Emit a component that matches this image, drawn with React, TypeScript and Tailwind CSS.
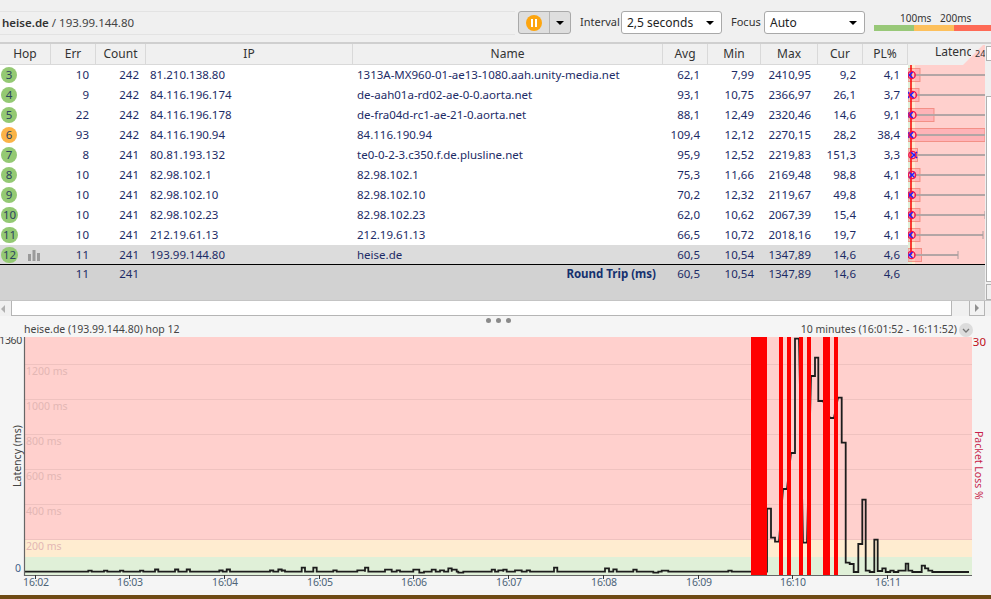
const hops = [
  { hop: 3, err: 10, count: 242, ip: "81.210.138.80", name: "1313A-MX960-01-ae13-1080.aah.unity-media.net", avg: "62,1", min: "7,99", max: "2410,95", cur: "9,2", pl: "4,1", box: 12, red: 911.2, blue: 909.6, end: 0 },
  { hop: 4, err: 9, count: 242, ip: "84.116.196.174", name: "de-aah01a-rd02-ae-0-0.aorta.net", avg: "93,1", min: "10,75", max: "2366,97", cur: "26,1", pl: "3,7", box: 11, red: 912.4, blue: 910.6, end: 0 },
  { hop: 5, err: 22, count: 242, ip: "84.116.196.178", name: "de-fra04d-rc1-ae-21-0.aorta.net", avg: "88,1", min: "12,49", max: "2320,46", cur: "14,6", pl: "9,1", box: 26, red: 912, blue: 909.8, end: 0 },
  { hop: 6, err: 93, count: 242, ip: "84.116.190.94", name: "84.116.190.94", avg: "109,4", min: "12,12", max: "2270,15", cur: "28,2", pl: "38,4", box: 77, red: 912, blue: 910.2, end: 0, warn: true },
  { hop: 7, err: 8, count: 241, ip: "80.81.193.132", name: "te0-0-2-3.c350.f.de.plusline.net", avg: "95,9", min: "12,52", max: "2219,83", cur: "151,3", pl: "3,3", box: 9.5, red: 912, blue: 914, end: 0 },
  { hop: 8, err: 10, count: 241, ip: "82.98.102.1", name: "82.98.102.1", avg: "75,3", min: "11,66", max: "2169,48", cur: "98,8", pl: "4,1", box: 12, red: 911.6, blue: 912, end: 0 },
  { hop: 9, err: 10, count: 241, ip: "82.98.102.10", name: "82.98.102.10", avg: "70,2", min: "12,32", max: "2119,67", cur: "49,8", pl: "4,1", box: 12, red: 911.4, blue: 910.4, end: 0 },
  { hop: 10, err: 10, count: 241, ip: "82.98.102.23", name: "82.98.102.23", avg: "62,0", min: "10,62", max: "2067,39", cur: "15,4", pl: "4,1", box: 12, red: 911.2, blue: 909.8, end: 985 },
  { hop: 11, err: 10, count: 241, ip: "212.19.61.13", name: "212.19.61.13", avg: "66,5", min: "10,72", max: "2018,16", cur: "19,7", pl: "4,1", box: 12, red: 911.2, blue: 909.8, end: 983 },
  { hop: 12, err: 11, count: 241, ip: "193.99.144.80", name: "heise.de", avg: "60,5", min: "10,54", max: "1347,89", cur: "14,6", pl: "4,6", box: 13.5, red: 911, blue: 909.6, end: 958, selected: true },
];

const bars = [[751, 767], [779, 783], [787, 791], [799, 803], [807, 811], [823, 830], [834, 838]];

// small bumps on the flat part of the latency line
const bumps = [
  [88.3, 91.7, 570.7], [104, 107.3, 570.7], [120, 123.3, 570.7], [140, 143.3, 570.7], [155, 158.3, 569.5], [175, 178.3, 569.5],
  [186.7, 190, 569.5], [219.3, 222.7, 570.5], [226.7, 230, 569.5], [270, 273.3, 570.5], [278.3, 281.7, 569.5], [281.7, 285, 570.5],
  [301.7, 305, 567.7], [313.3, 316.7, 567.7], [333.3, 336.7, 570.3], [357.3, 365, 570.3], [365, 368.3, 567.7], [385, 391.7, 569.7],
  [396.7, 400, 570.3], [413.3, 419.3, 569.7], [419.3, 424, 572.7], [431.7, 435.7, 569.7], [440, 444, 570.3], [448.3, 451.7, 568.3],
  [451.7, 456.7, 569.7], [458.3, 463.3, 572.7], [491.7, 495, 569.7], [498.3, 503.3, 570.3], [503.3, 506.7, 569.7], [515, 521.7, 570.3],
  [526.7, 530, 570.3], [554, 557.3, 567.7], [605, 609, 568.3], [613.3, 616.7, 569.3], [633.3, 636.7, 569.7], [653.3, 658.3, 572.7],
  [661.7, 668.3, 570.7], [728.3, 731.7, 570.7],
];

// the spike section, after the first loss bar
const spikes = [
  [767, 771, 508.7], [771, 775, 537.7], [775, 779, 541.7], [783, 787, 489], [791, 795, 453], [795, 799, 338.7], [803, 807, 542.7],
  [811, 815, 376], [815, 818.3, 357.7], [818.3, 823, 401], [830, 834, 418], [838, 841.7, 397.7], [841.7, 845.7, 442.7],
  [845.7, 849.7, 562.7], [849.7, 853.7, 564], [853.7, 858.3, 572], [858.3, 862.3, 544], [862.3, 865.7, 499.7], [865.7, 869.7, 570.7],
  [869.7, 874.3, 572], [874.3, 877.7, 539.7], [877.7, 882.3, 571], [882.3, 885.7, 568.3], [885.7, 890.3, 572], [890.3, 893.7, 570.7],
  [893.7, 898.3, 572], [898.3, 905.7, 570.7], [905.7, 908.3, 563.7], [908.3, 912.3, 570.7], [912.3, 921.7, 572], [921.7, 925, 565.7],
  [925, 928.3, 568.3], [928.3, 932.3, 570.7], [932.3, 969, 572],
];

const buildLine = () => {
  const base = 571.7;
  let d = `M25 ${base}`;
  for (const [a, b, y] of bumps) d += ` L${a} ${base} L${a} ${y} L${b} ${y} L${b} ${base}`;
  d += ` L767 ${base}`;
  for (const [a, b, y] of spikes) d += ` L${a} ${y} L${b} ${y}`;
  return d;
};

const times = [
  [36, "16:02"], [130, "16:03"], [225, "16:04"], [320, "16:05"], [414, "16:06"],
  [509, "16:07"], [604, "16:08"], [699, "16:09"], [793, "16:10"], [888, "16:11"],
] as const;

const gridLabels = [
  [364, "1200 ms"], [399, "1000 ms"], [434, "800 ms"], [469, "600 ms"], [504, "400 ms"], [539, "200 ms"],
] as const;

const Select = ({ value, className }: { value: string; className: string }) => (
  <div className={`h-[23px] shrink-0 flex items-center justify-between bg-white border border-[#a9a9a9] rounded-[3px] pl-[5px] pr-[7px] text-[12px] text-[#222] ${className}`}>
    <span>{value}</span>
    <span className="w-0 h-0 border-x-[4px] border-x-transparent border-t-[4px] border-t-black" />
  </div>
);

const LatencyCell = ({ row, last }: { row: (typeof hops)[number]; last: boolean }) => (
  <svg width="77" height="20" viewBox="908 0 77 20" className="shrink-0 block">
    <rect x="908" y="0" width="77" height="20" fill="#ffd0cd" />
    <rect x="908" y="0" width="4" height="20" fill="#e0f0d8" />
    <rect x="912" y="0" width="3" height="20" fill="#ffecd0" />
    <rect x="908" y="3.5" width={row.box} height="13" fill="#ff6f85" fillOpacity="0.3" stroke="#ee7b6c" strokeOpacity="0.7" />
    <line x1={row.red + 3} x2={row.end || 985} y1="10" y2="10" stroke="#b3a5a5" strokeWidth="2" />
    {row.end > 0 && <line x1={row.end} x2={row.end} y1="6" y2="14" stroke="#a89c9c" strokeWidth="1" />}
    <line x1="911" x2="911" y1="0" y2={last ? 10 : 20} stroke="#ff0000" strokeWidth="1.5" />
    <path d={`M${row.blue - 3} 7 l6 6 m0 -6 l-6 6`} stroke="#2020ff" strokeWidth="1.6" />
    <circle cx={row.red + 0.4} cy="10" r="3.6" fill="none" stroke="#f5104a" strokeWidth="1.4" />
  </svg>
);

export default function App() {
  return (
    <div className="w-[991px] h-[599px] overflow-hidden flex flex-col bg-[#f0f0f0] text-[11.5px] text-[#1c2b66] font-['Noto_Sans',sans-serif]">
      {/* toolbar */}
      <div className="h-[44px] shrink-0 flex items-start pt-[11px] border-b-2 border-[#cfcfcf]">
        <div className="w-[515px] h-[24px] shrink-0 flex items-center pl-[2px] border-y border-[#e3e3e3] text-[11.5px] text-[#444]">
          <b className="font-semibold text-[#333]">heise.de</b>&nbsp;/ 193.99.144.80
        </div>
        <div className="ml-[3px] w-[53px] h-[23px] shrink-0 flex rounded-[3px] border border-[#a9a9a9] bg-[#dedede]">
          <div className="w-[31px] flex items-center justify-center border-r border-[#b5b5b5]">
            <div className="w-[16px] h-[16px] rounded-full bg-[#fda50f] flex items-center justify-center gap-[2px]">
              <span className="w-[2px] h-[8px] bg-white" />
              <span className="w-[2px] h-[8px] bg-white" />
            </div>
          </div>
          <div className="flex-1 flex items-center justify-center">
            <span className="w-0 h-0 border-x-[4px] border-x-transparent border-t-[4px] border-t-black" />
          </div>
        </div>
        <span className="ml-[9px] w-[41px] shrink-0 whitespace-nowrap h-[23px] leading-[22px] text-[11px] text-[#333]">Interval</span>
        <Select value="2,5 seconds" className="w-[101px]" />
        <span className="ml-[9px] w-[33px] shrink-0 whitespace-nowrap h-[23px] leading-[22px] text-[11px] text-[#333]">Focus</span>
        <Select value="Auto" className="w-[101px]" />
        <div className="ml-[9px] w-[117px] shrink-0 flex flex-col">
          <div className="h-[14px] relative text-[10px] leading-[14px] text-[#333]">
            <span className="absolute left-[26px]">100ms</span>
            <span className="absolute left-[66px]">200ms</span>
          </div>
          <div className="h-[6px] flex">
            <span className="w-[40px] bg-[#98c878]" />
            <span className="w-[40px] bg-[#fdc05c]" />
            <span className="flex-1 bg-[#fe6a56]" />
          </div>
        </div>
      </div>

      {/* hop table */}
      <div className="h-[256px] shrink-0 flex">
        <div className="w-[985px] shrink-0 flex flex-col">
          <div className="h-[21px] shrink-0 flex text-[12px] text-[#333] bg-[#f0f0f0]">
            {[["Hop", "w-[51px]"], ["Err", "w-[45px]"], ["Count", "w-[50px]"], ["IP", "w-[207px]"], ["Name", "w-[310px]"], ["Avg", "w-[45px]"], ["Min", "w-[53px]"], ["Max", "w-[57px]"], ["Cur", "w-[45px]"], ["PL%", "w-[45px]"]].map(([label, width]) => (
              <div key={label} className={`${width} flex items-center justify-center border-r border-b border-[#d9d9d9]`}>
                {label}
              </div>
            ))}
            <div className="relative w-[77px] overflow-hidden">
              <svg width="77" height="21" className="absolute inset-0 block">
                <polygon points="55,21 75,1 77,1 77,21" fill="#ffd0cd" />
              </svg>
              <span className="absolute left-[27px] top-[-1px] w-[36px] overflow-hidden whitespace-nowrap">Latency</span>
              <span className="absolute left-[67px] top-[3px] text-[9px]">24</span>
            </div>
          </div>
          {hops.map((row, i) => (
            <div key={row.hop} className={`h-[20px] shrink-0 flex items-center ${row.selected ? "bg-[#dcdcdc]" : "bg-white"}`}>
              <div className="w-[51px] h-full flex items-center pl-[1px]">
                <span className={`h-[16px] min-w-[16px] px-[2px] rounded-full flex items-center justify-center text-[#2c4460] leading-none ${row.warn ? "bg-[#fbb347]" : "bg-[#94c973]"}`}>
                  {row.hop}
                </span>
                {row.selected && (
                  <svg width="12" height="11" viewBox="0 0 12 11" className="ml-[10px]">
                    <path d="M0 4h3v7H0zM4.5 0h3v11h-3zM9 3h3v8H9z" fill="#9a9a9a" />
                  </svg>
                )}
              </div>
              <div className="w-[45px] text-right pr-[7px]">{row.err}</div>
              <div className="w-[50px] text-right pr-[7px]">{row.count}</div>
              <div className="w-[207px] pl-[4px]">{row.ip}</div>
              <div className="w-[310px] pl-[4px] whitespace-nowrap">{row.name}</div>
              <div className="w-[45px] text-right pr-[8px]">{row.avg}</div>
              <div className="w-[53px] text-right pr-[7px]">{row.min}</div>
              <div className="w-[57px] text-right pr-[7px]">{row.max}</div>
              <div className="w-[45px] text-right pr-[7px]">{row.cur}</div>
              <div className="w-[45px] text-right pr-[8px]">{row.pl}</div>
              <LatencyCell row={row} last={i === hops.length - 1} />
            </div>
          ))}
          <div className="flex-1 flex items-start bg-[#d2d2d2] border-t border-black -mt-px">
            <div className="w-[51px]" />
            <div className="w-[45px] text-right pr-[7px]">11</div>
            <div className="w-[50px] text-right pr-[7px]">241</div>
            <div className="w-[517px] text-right pr-[7px] font-bold text-[#14306e]">Round Trip (ms)</div>
            <div className="w-[45px] text-right pr-[8px]">60,5</div>
            <div className="w-[53px] text-right pr-[7px]">10,54</div>
            <div className="w-[57px] text-right pr-[7px]">1347,89</div>
            <div className="w-[45px] text-right pr-[7px]">14,6</div>
            <div className="w-[45px] text-right pr-[8px]">4,6</div>
          </div>
        </div>
        <div className="flex-1 flex flex-col items-end">
          <div className="w-[5px] h-[15px] mt-[2px] bg-white border-l border-y border-[#b0b0b0]" />
          <div className="w-[5px] h-[186px] mt-[35px] bg-white border-l border-y border-[#b0b0b0]" />
          <div className="w-[5px] h-[16px] mt-[2px] bg-[#f0f0f0] border-l border-y border-[#b0b0b0]" />
        </div>
      </div>

      {/* horizontal scrollbar */}
      <div className="h-[16px] shrink-0 flex items-stretch border-t border-[#c4c4c4]">
        <div className="w-[11px] flex items-center pl-[1px]">
          <span className="w-0 h-0 border-y-[4px] border-y-transparent border-r-[4px] border-r-[#b0b0b0]" />
        </div>
        <div className="w-[941px] bg-white border-x border-b border-[#b5b5b5]" />
        <div className="w-[17px]" />
        <div className="w-[16px] flex items-center justify-center border border-[#b5b5b5] border-t-0 bg-[#f2f2f2]">
          <span className="w-0 h-0 border-y-[4px] border-y-transparent border-l-[4px] border-l-[#909090]" />
        </div>
      </div>

      {/* detail chart */}
      <div className="flex-1 flex flex-col bg-[#f5f5f5] min-h-0">
        <div className="h-[6px] shrink-0 flex items-center justify-center gap-[5px] ml-[5px] mt-[1px]">
          <span className="w-[5px] h-[5px] rounded-full bg-[#8a8a8a]" />
          <span className="w-[5px] h-[5px] rounded-full bg-[#8a8a8a]" />
          <span className="w-[5px] h-[5px] rounded-full bg-[#8a8a8a]" />
        </div>
        <div className="h-[14px] shrink-0 flex items-center text-[10.5px] text-[#444] pl-[24px] pr-[18px]">
          <span>heise.de (193.99.144.80) hop 12</span>
          <span className="ml-auto">10 minutes (16:01:52 - 16:11:52)</span>
          <span className="ml-[2px] w-[14px] h-[14px] rounded-full bg-[#dcdcdc] flex items-center justify-center">
            <svg width="8" height="5" viewBox="0 0 8 5">
              <path d="M1 1l3 3 3-3" fill="none" stroke="#777" strokeWidth="1.3" />
            </svg>
          </span>
        </div>
        <svg width="991" height="258" viewBox="0 337 991 258" className="block shrink-0" fontFamily="'Noto Sans', sans-serif" fontSize="10.5">
          <rect x="25" y="337" width="947" height="203" fill="#ffd0cd" />
          <rect x="25" y="540" width="947" height="17" fill="#ffecd0" />
          <rect x="25" y="557" width="947" height="18" fill="#e0f0d8" />
          {gridLabels.map(([y, label]) => (
            <g key={label}>
              <line x1="25" x2="972" y1={y + 0.5} y2={y + 0.5} stroke="#efc2bf" />
              <text x="26" y={y + 11} fill="#e3b7b4">{label}</text>
            </g>
          ))}
          <path d={buildLine()} fill="none" stroke="#1c1c1c" strokeWidth="1.8" />
          {bars.map(([a, b]) => (
            <rect key={a} x={a} y="337" width={b - a} height="238" fill="#ff0000" />
          ))}
          <path d="M24.5 337V575.5H972" fill="none" stroke="#666" strokeWidth="1.2" />
          <text x="22" y="344" textAnchor="end" fill="#444" letterSpacing="-0.3">1360</text>
          <text x="21" y="572" textAnchor="end" fill="#3f5f8a">0</text>
          <text x="986" y="346" textAnchor="end" fill="#c0101a" fontSize="11.5">30</text>
          <text transform="translate(21 487) rotate(-90)" fill="#444">Latency (ms)</text>
          <text transform="translate(975 431) rotate(90)" fill="#c81e4a">Packet Loss %</text>
          {times.map(([x, label]) => (
            <g key={label}>
              <line x1={x - 0.5} x2={x - 0.5} y1="575" y2="579" stroke="#333" />
              <text x={x} y="586" textAnchor="middle" fill="#4d6478" letterSpacing="-0.2">{label}</text>
            </g>
          ))}
        </svg>
        <div className="flex-1 bg-[#6e4a14]" />
      </div>
    </div>
  );
}
